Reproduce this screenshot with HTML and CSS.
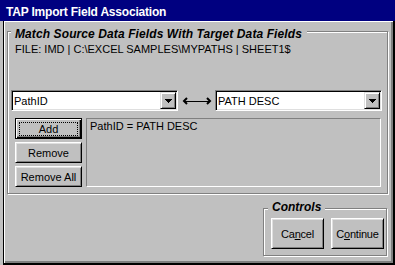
FILE: index.html
```html
<!DOCTYPE html>
<html lang="en">
<head>
    <meta charset="UTF-8">
    <meta name="viewport" content="width=device-width, initial-scale=1.0">
    <title>TAP Import Field Association</title>
    <link rel="stylesheet" href="styles.css">
</head>
<body>
    <div class="window">
        <div class="titlebar">TAP Import Field Association</div>

        <div class="client">
            <!-- source / target field matching -->
            <div class="group main-group">
                <div class="group-title">Match Source Data Fields With Target Data Fields</div>
                <div class="file-path">FILE: IMD | C:\EXCEL SAMPLES\MYPATHS | SHEET1$</div>

                <div class="field-row">
                    <div class="combo">
                        <span class="combo-text">PathID</span>
                        <span class="combo-btn">
                            <svg width="7" height="4" viewBox="0 0 7 4"><path d="M0 0h7v1h-1v1h-1v1h-1v1h-1v-1h-1v-1h-1v-1h-1z" fill="#000"/></svg>
                        </span>
                    </div>
                    <div class="link-arrow">
                        <svg width="30" height="8" viewBox="0 0 30 8">
                            <path d="M5 1 L2 4 L5 7 M25 1 L28 4 L25 7" fill="none" stroke="#000" stroke-width="2"/>
                            <path d="M3 4.5 H27" stroke="#000" stroke-width="1"/>
                        </svg>
                    </div>
                    <div class="combo">
                        <span class="combo-text">PATH DESC</span>
                        <span class="combo-btn">
                            <svg width="7" height="4" viewBox="0 0 7 4"><path d="M0 0h7v1h-1v1h-1v1h-1v1h-1v-1h-1v-1h-1v-1h-1z" fill="#000"/></svg>
                        </span>
                    </div>
                </div>

                <div class="mapping-row">
                    <div class="mapping-buttons">
                        <button class="btn small default"><span class="focus">Add</span></button>
                        <button class="btn small">Remove</button>
                        <button class="btn small">Remove All</button>
                    </div>
                    <div class="mapping-list">
                        <div class="mapping-item">PathID = PATH DESC</div>
                    </div>
                </div>
            </div>

            <!-- dialog buttons -->
            <div class="group controls-group">
                <div class="group-title">Controls</div>
                <div class="controls-row">
                    <button class="btn big">Ca<u>n</u>cel</button>
                    <button class="btn big">C<u>o</u>ntinue</button>
                </div>
            </div>
        </div>
    </div>
</body>
</html>
```

FILE: styles.css
```css
body {
    margin: 0;
    font-family: "Liberation Sans", Arial, sans-serif;
    font-size: 11px;
    color: #000;
    background: #c0c0c0;
}
.window {
    width: 395px;
    height: 265px;
    display: flex;
    flex-direction: column;
    background: #c0c0c0;
}
.titlebar {
    height: 21px;
    box-sizing: border-box;
    padding: 5px 0 0 6px;
    background: #000080;
    color: #fff;
    font-size: 12px;
    font-weight: bold;
    line-height: 14px;
    letter-spacing: -0.2px;
}
.client {
    flex: 1;
    margin-left: 3px;
    border-left: 1px solid #000;
    border-right: 2px solid #000;
    border-bottom: 2px solid #000;
    box-shadow: inset 1px 1px #fff, inset -2px -2px #808080;
    padding: 10px 0 0 3px;
    display: flex;
    flex-direction: column;
}

/* etched group box */
.group {
    box-sizing: border-box;
    border: 1px solid #808080;
    box-shadow: inset 1px 1px #fff, 1px 1px #fff;
}
.group-title {
    width: fit-content;
    background: #c0c0c0;
    font-size: 12px;
    font-weight: bold;
    font-style: italic;
    line-height: 14px;
}
.main-group {
    width: 381px;
    height: 163px;
    padding: 0 4px 0 3px;
}
.main-group .group-title {
    margin-top: -5px;
    padding: 0 5px 0 4px;
    letter-spacing: 0.1px;
}
.file-path {
    margin: 2px 0 0 4px;
    line-height: 13px;
}

.field-row {
    display: flex;
    margin-top: 34px;
}
.combo {
    width: 167px;
    height: 21px;
    box-sizing: border-box;
    display: flex;
    background: #fff;
    border: 1px solid;
    border-color: #808080 #fff #fff #808080;
    box-shadow: inset 1px 1px #000, inset -1px -1px #dfdfdf;
    padding: 1px;
}
.combo-text {
    flex: 1;
    padding: 3px 0 0 1px;
    line-height: 13px;
}
.combo-btn {
    width: 16px;
    box-sizing: border-box;
    display: flex;
    align-items: center;
    justify-content: center;
    background: #c0c0c0;
    border: 1px solid;
    border-color: #dfdfdf #000 #000 #dfdfdf;
    box-shadow: inset 1px 1px #fff, inset -1px -1px #808080;
}
.link-arrow {
    width: 37px;
    display: flex;
    justify-content: center;
    align-items: flex-start;
    padding-top: 7px;
    box-sizing: border-box;
}

.mapping-row {
    display: flex;
    gap: 4px;
    margin-top: 7px;
    padding-left: 4px;
}
.mapping-buttons {
    width: 67px;
    display: flex;
    flex-direction: column;
    gap: 3px;
}
.mapping-list {
    width: 295px;
    height: 69px;
    box-sizing: border-box;
    border: 1px solid;
    border-color: #808080 #fff #fff #808080;
    padding: 1px 3px;
    line-height: 13px;
}

/* win95 push buttons */
.btn {
    box-sizing: border-box;
    padding: 0;
    background: #c0c0c0;
    font-family: "Liberation Sans", Arial, sans-serif;
    font-size: 11px;
    color: #000;
    border: 1px solid;
    border-color: #fff #000 #000 #fff;
    box-shadow: inset 1px 1px #dfdfdf, inset -1px -1px #808080;
    display: flex;
    align-items: center;
    justify-content: center;
}
.btn.small {
    height: 21px;
}
.btn.default {
    border-color: #000;
    box-shadow: inset 1px 1px #fff, inset -1px -1px #000, inset -2px -2px #808080;
    align-items: stretch;
}
.btn .focus {
    flex: 1;
    margin: 3px 3px 2px;
    border: 1px dotted #000;
    display: flex;
    align-items: center;
    justify-content: center;
}
.controls-group {
    align-self: flex-end;
    width: 124px;
    height: 48px;
    margin: 14px 6px 0 0;
}
.controls-group .group-title {
    margin: -9px 0 0 4px;
    padding: 0 4px;
}
.controls-row {
    display: flex;
    gap: 7px;
    margin: 4px 0 0 7px;
}
.btn.big {
    width: 53px;
    height: 31px;
    letter-spacing: -0.2px;
}
```
